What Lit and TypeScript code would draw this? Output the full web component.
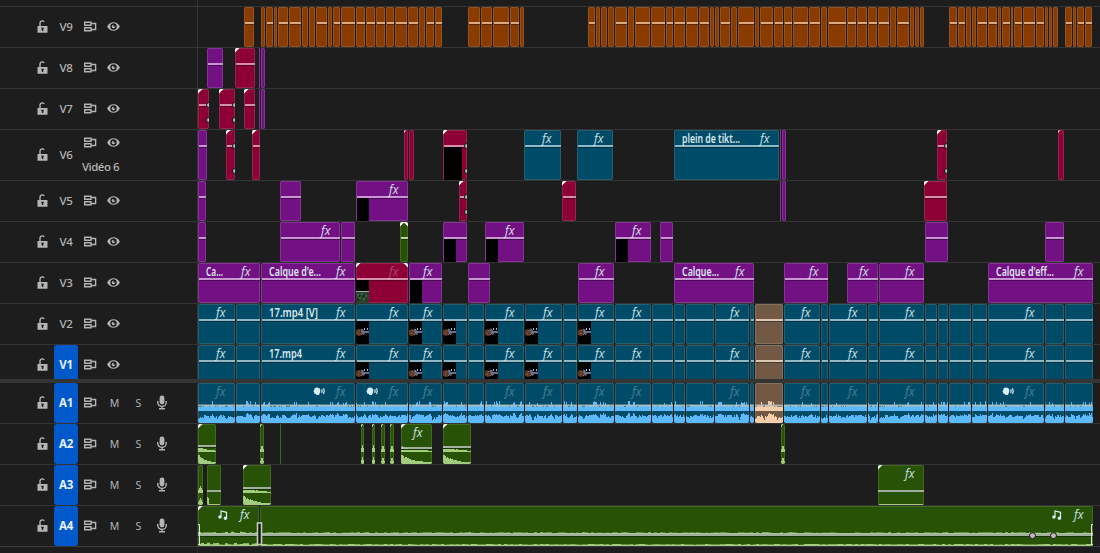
import { LitElement, html, svg, css, nothing } from "lit";
import { customElement, property } from "lit/decorators.js";
import { classMap } from "lit/directives/class-map.js";
import { styleMap } from "lit/directives/style-map.js";

type Wave = "voice" | "decay" | "peak" | "music" | "none";

interface Clip {
  s: number;
  e: number;
  color: string;
  line?: boolean;
  fx?: boolean;
  dim?: boolean;
  label?: string;
  len?: number;
  thumb?: string;
  thumbW?: number;
  corner?: boolean;
  corner2?: boolean;
  keys?: number[];
  speech?: boolean;
  note?: boolean;
  wave?: Wave;
  level?: number;
}

interface Track {
  name: string;
  audio?: boolean;
  target?: boolean;
  title?: string;
  size?: string;
  clips: Clip[];
}

const ORIGIN = 198;

const c = (s: number, e: number, color: string, more: Partial<Clip> = {}): Clip => ({
  s, e, color, line: true, ...more,
});

/* Runs of butted clips: each entry is a start, negative when the clip has no opacity line. */
const run = (starts: number[], end: number): Clip[] =>
  starts.map((v, i) => {
    const next = i + 1 < starts.length ? Math.abs(starts[i + 1]) - 1 : end;
    return c(Math.abs(v), next, "orange", { line: v > 0 });
  });

const v9: Clip[] = [
  c(244, 254, "orange"),
  ...run([-261, 266, -274, 278, 289, -302, -309, 316, -328, 333, 341, 356, 366, 376, 386, 395, 408, -419, 426, 435], 442),
  ...run([468, 481, 493, 510, -520], 524),
  ...run([588, -596, -601, -608, 615, -628, 635, 651, 666, 674, 686, 699, -710, -715, 720, -731, 738, -755, 760, 774, 784, 793,
    809, -821, 828, 847, 857, 868, 878, -890, 897, -910, -915, -920], 924),
  ...run([949, 958, -966, -972, 977, 988, -998, 1002, -1011, 1014, 1023, 1036, -1045, -1049, -1053], 1058),
  ...run([1065, -1073, 1077, 1085], 1092),
];

const cuts = [198, 236, 261, 356, 409, 443, 468, 485, 525, 563, 578, 615, 652, 674, 686, 715, 750, 755, 784, 821, 829, 868,
  879, 925, 938, 949, 972, 988, 1045, 1065, 1094];
const fxAt = new Set([198, 261, 356, 409, 485, 525, 578, 615, 715, 784, 829, 879, 988]);
const thumbAt = new Set([356, 409, 443, 485, 525, 578]);
const speechAt = new Set([261, 356, 988]);

const mainTrack = (label: string, len: number): Clip[] =>
  cuts.slice(0, -1).map((s, i) =>
    c(s, cuts[i + 1] - 1, s === 755 ? "tan" : "blue", {
      fx: fxAt.has(s),
      thumb: thumbAt.has(s) ? "photo" : undefined,
      label: s === 261 ? label : undefined,
      len,
    }));

const voiceTrack: Clip[] = cuts.slice(0, -1).map((s, i) =>
  c(s, cuts[i + 1] - 1, s === 755 ? "tan" : "blue", {
    line: false, fx: fxAt.has(s), dim: true, speech: speechAt.has(s), wave: "voice",
  }));

const g = (s: number, e: number, more: Partial<Clip> = {}): Clip => c(s, e, "green", { line: false, ...more });

const videoTracks: Track[] = [
  { name: "V9", clips: v9 },
  { name: "V8", clips: [
    c(207, 223, "purple"), c(235, 255, "red", { corner: true }),
    c(259, 260, "purple", { line: false }), c(261, 265, "purple", { line: false }) ] },
  { name: "V7", clips: [
    c(198, 209, "red", { corner: true, keys: [16, 31] }), c(219, 235, "red", { corner: true, keys: [16, 31] }),
    c(244, 255, "red", { corner: true }),
    c(259, 260, "purple", { line: false }), c(261, 265, "purple", { line: false }) ] },
  { name: "V6", title: "Vidéo 6", size: "tall", clips: [
    c(198, 207, "purple"), c(226, 235, "red", { corner: true, keys: [16, 41] }), c(252, 260, "red", { corner: true }),
    c(404, 408, "red", { line: false, corner: true }), c(409, 414, "red", { line: false }),
    c(443, 467, "red", { corner: true, thumb: "black", thumbW: 18, keys: [16, 41] }),
    c(524, 561, "blue", { fx: true }), c(577, 613, "blue", { fx: true }),
    c(674, 779, "blue", { fx: true, label: "plein de tikt...", len: 58 }),
    c(780, 781, "purple", { line: false }), c(782, 786, "purple", { line: false }),
    c(937, 947, "red", { corner: true, keys: [16, 41] }), c(1058, 1064, "red", { line: false, corner: true }) ] },
  { name: "V5", clips: [
    c(198, 206, "purple"), c(280, 301, "purple"), c(356, 408, "purple", { fx: true, thumb: "black" }),
    c(459, 467, "red", { corner: true, keys: [16, 31] }), c(562, 576, "red", { corner: true }),
    c(780, 781, "purple", { line: false }), c(782, 786, "purple", { line: false }),
    c(924, 947, "red", { corner: true }) ] },
  { name: "V4", clips: [
    c(198, 206, "purple"), c(280, 340, "purple", { fx: true }), c(341, 355, "purple"),
    c(400, 408, "green", { corner: true, corner2: true }), c(443, 467, "purple", { thumb: "black" }),
    c(485, 524, "purple", { fx: true, thumb: "black" }), c(615, 651, "purple", { fx: true, thumb: "black" }),
    c(660, 673, "purple"), c(925, 948, "purple"), c(1045, 1064, "purple") ] },
  { name: "V3", clips: [
    c(198, 260, "purple", { fx: true, label: "Ca...", len: 17 }),
    c(261, 355, "purple", { fx: true, label: "Calque d'e...", len: 52 }),
    c(356, 408, "red", { fx: true, dim: true, corner: true, corner2: true, thumb: "leaf" }),
    c(409, 442, "purple", { fx: true, thumb: "black" }), c(468, 490, "purple"), c(578, 614, "purple", { fx: true }),
    c(674, 754, "purple", { fx: true, label: "Calque...", len: 37 }), c(784, 828, "purple", { fx: true }),
    c(847, 878, "purple", { fx: true }), c(879, 924, "purple", { fx: true }),
    c(988, 1093, "purple", { fx: true, label: "Calque d'eff...", len: 58 }) ] },
  { name: "V2", clips: mainTrack("17.mp4 [V]", 49) },
  { name: "V1", target: true, size: "cut", clips: mainTrack("17.mp4", 33) },
];

const audioTracks: Track[] = [
  { name: "A1", audio: true, target: true, size: "first", clips: voiceTrack },
  { name: "A2", audio: true, target: true, clips: [
    g(198, 216, { corner: true, wave: "decay", level: 22 }), g(260, 264, { wave: "peak", corner: true }), g(280, 281),
    g(361, 364, { wave: "peak", corner: true }), g(372, 375, { wave: "peak", corner: true }),
    g(381, 385, { wave: "peak", corner: true }), g(390, 394, { wave: "peak", corner: true }),
    g(401, 432, { wave: "decay", corner: true, fx: true, level: 24 }),
    g(443, 471, { wave: "decay", corner: true, level: 23 }), g(781, 785, { wave: "peak", corner: true }) ] },
  { name: "A3", audio: true, target: true, clips: [
    g(198, 203, { wave: "peak" }), g(207, 221, { wave: "none", level: 25 }),
    g(243, 271, { wave: "decay", corner: true, level: 23 }),
    g(878, 924, { wave: "none", corner: true, fx: true, level: 25 }) ] },
  { name: "A4", audio: true, target: true, clips: [
    g(198, 259, { wave: "music", corner: true, fx: true, note: true }),
    g(260, 1093, { wave: "music", fx: true, note: true }) ] },
];

/* Repeatable noise, so that each clip keeps its own waveform. */
const noise = (n: number): number => {
  const v = Math.sin(n * 12.9898) * 43758.5453;
  return v - Math.floor(v);
};

const bars = (w: number, base: number, h: (i: number) => number): string => {
  let d = `M0 ${base}`;
  for (let i = 0; i < w; i++) d += `V${(base - h(i)).toFixed(1)}h1`;
  return d + `V${base}Z`;
};

const waveform = (k: Clip) => {
  const w = k.e - k.s;
  if (k.wave === "voice") {
    const amp = (i: number) => {
      const x = k.s + i;
      return 0.45 * noise(x) + 0.55 * noise(Math.floor(x / 3) + 7);
    };
    return svg`
      <path class="wave" d=${bars(w, 28, (i) => (amp(i) < 0.3 ? 4 : amp(i) < 0.72 ? 6 : 8 + noise(i) * 2))}></path>
      <path class="wave" d=${bars(w, 40, (i) => 2.5 + Math.pow(amp(i), 0.7) * 7.5)}></path>
      <rect class="gain" y="21.500" width=${w} height="2"></rect>`;
  }
  if (k.wave === "decay") {
    const env = (i: number) => Math.exp(-i / (w * 0.42));
    return svg`
      <path class="wave" d=${bars(w, 28, (i) => 1 + 5 * env(i) * (0.8 + noise(i) * 0.3))}></path>
      <path class="wave" d=${bars(w, 40, (i) => 1 + 8 * env(i) * (0.8 + noise(i + 9) * 0.3))}></path>
      <rect class="shade" y=${(k.level ?? 22) + 1} width=${w} height="1"></rect>
      <rect class="gain" y=${(k.level ?? 22) - 1} width=${w} height="2"></rect>`;
  }
  if (k.wave === "peak") {
    const top = (i: number) => 2 + 5 * (1 - Math.abs(i - w / 2 + 0.5) / (w / 2));
    return svg`<path class="wave" d=${bars(w, 28, top)}></path><path class="wave" d=${bars(w, 40, top)}></path>`;
  }
  if (k.wave === "music") {
    const loud = w < 100 ? 2 : 0.9;
    return svg`
      <path class="wave soft" d=${bars(w, 28, (i) => 0.8 + loud * noise(Math.floor((i + k.s) / 3)))}></path>
      <path class="wave soft" d=${bars(w, 40, (i) => 1.2 + loud * noise(Math.floor((i + k.s) / 3) + 50))}></path>
      <rect class="gain" y="27.500" width=${w} height="2.500"></rect>
      <rect class="shade" y="30" width=${w} height="1"></rect>`;
  }
  return k.level
    ? svg`<rect class="wave" y="39" width=${w} height="1"></rect>
        ${w < 20 ? svg`<path class="wave" d="M0 40V34l1-4 1 5v5z"></path>` : nothing}
        <rect class="gain" y=${k.level} width=${w} height="2"></rect>`
    : nothing;
};

@customElement("timeline-clip")
class TimelineClip extends LitElement {
  @property({ attribute: false }) clip!: Clip;

  static styles = css`
    :host { display: block; height: 100%; }
    .clip {
      position: relative; height: 100%; overflow: hidden;
      border-radius: 2px; background: var(--fill); box-shadow: inset 0 0 0 1px var(--edge);
    }
    .orange { --fill: #8a3b00; --edge: #925222; --rule: #dba981; }
    .purple { --fill: #731084; --edge: #853395; --rule: #c994d2; }
    .red { --fill: #8c0035; --edge: #96234e; --rule: #d68fa9; }
    .blue { --fill: #004c68; --edge: #24606f; --rule: #8fb8c4; --wave: #5cb9fb; }
    .tan { --fill: #725945; --edge: #85705e; --rule: #dcc8b4; --wave: #f6cdab; }
    .green { --fill: #285306; --edge: #40681f; --rule: #b9d39f; --wave: #a3cd7d; }
    .thin { box-shadow: none; border-radius: 0; background: var(--edge); }
    .head { display: flex; justify-content: flex-end; height: 15px; padding-right: 9px; }
    .head svg { display: block; flex: none; overflow: visible; }
    .label { margin: 0 auto 0 8px; }
    .name { font: 600 12px "Noto Sans", "Open Sans", sans-serif; fill: #dbe7ec; }
    .fx { font: italic 400 12.5px "Open Sans", "Noto Sans", sans-serif; fill: #cfe2e9; }
    .dim .fx { fill: #fff; opacity: 0.27; }
    .rule { height: 2px; margin-left: 1px; background: var(--rule); box-shadow: 0 1px 0 rgba(0, 0, 0, 0.35); }
    .thumb { width: 12px; height: 23px; margin-left: 1px; background: #000; }
    .photo, .leaf { width: 13px; margin-left: 0; }
    .wide { width: 18px; height: 33px; }
    .thumb svg { display: block; }
    .over { position: absolute; top: 0; left: 0; overflow: visible; }
    .corner { fill: #fff; }
    .wave { fill: var(--wave); shape-rendering: crispEdges; }
    .soft { shape-rendering: auto; }
    .gain { fill: #b5bfba; opacity: 0.85; }
    .shade { fill: #173303; }
    .key { fill: #b9b9b9; stroke: #161616; stroke-width: 1; }
    .mark { fill: #d8eef5; }
    .stroke { fill: none; stroke: #d8eef5; stroke-width: 1.2; }
    .icon { margin-right: 10px; }
    .music { margin-right: 12px; }
  `;

  private thumb(kind: string, wide: boolean) {
    return html`<div class=${classMap({ thumb: true, [kind]: true, wide })}>
      ${kind === "photo"
        ? html`<svg width="13" height="23" viewBox="0 0 13 23">
            <path d="M0 9l3-1 1 1 2-2v7l-3 1-3-1z" fill="#5b3a2c"></path>
            <path d="M5 8l2 0 1 2h5v2H9l-1 2-2-1z" fill="#66718a"></path>
            <path d="M2 12h1v1H2zM5 13h1v1H5zM3 9h1v1H3z" fill="#c96430"></path>
            <path d="M8 7h1v2H8zM11 7h1v2h-1z" fill="#a9bdd6"></path>
          </svg>`
        : kind === "leaf"
          ? html`<svg width="13" height="23" viewBox="0 0 13 23">
              <path d="M0 12h13v11H0z" fill="#27442c"></path><path d="M0 11h13v1H0z" fill="#9fb19d"></path>
              <path d="M1 14h2v2H1zM5 13h2v2H5zM9 15h2v2H9zM3 17h2v2H3zM7 18h2v2H7z" fill="#3f6343"></path>
              <path d="M3 15h1v2H3zM7 15h2v2H7zM1 19h2v2H1zM10 19h1v2h-1z" fill="#142417"></path>
            </svg>`
          : nothing}
    </div>`;
  }

  render() {
    const k = this.clip;
    const w = k.e - k.s;
    return html`<div class=${classMap({ clip: true, [k.color]: true, thin: w < 2, dim: !!k.dim })}>
      ${k.wave || k.level
        ? html`<svg class="over" width=${w} height="40">${waveform(k)}</svg>`
        : nothing}
      ${w < 3 ? nothing : html`<div class="head">
        ${k.label
          ? html`<svg class="label" width=${k.len ?? 0} height="15">
              <text class="name" y="12.500" textLength=${k.len ?? 0} lengthAdjust="spacingAndGlyphs">${k.label}</text>
            </svg>`
          : nothing}
        ${k.speech
          ? html`<svg class="icon" width="13" height="15" viewBox="0 0 13 15">
              <path class="mark" d="M4 4.600a3.400 3.400 0 0 1 3.300 3.600c0 1.500-1 2.200-1.200 3.800H3.200c0-1-.3-1.200-1.200-1.200-.8 0-.9-.5-.9-1.600L.4 8.600l.6-1A3.300 3.300 0 0 1 4 4.600z"></path>
              <path class="stroke" d="M8.700 6.300q.9 1.800 0 3.600M10.500 5.200q1.600 2.900 0 5.800"></path>
            </svg>`
          : nothing}
        ${k.note
          ? html`<svg class="music" width="10" height="15" viewBox="0 0 10 15">
              <path class="stroke" d="M3 11V5l5.500 1.300V12"></path>
              <circle class="mark" cx="1.900" cy="11" r="1.700"></circle><circle class="mark" cx="7.400" cy="12.300" r="1.700"></circle>
            </svg>`
          : nothing}
        ${k.fx ? html`<svg width="10" height="15"><text class="fx" x="0" y="12.500" textLength="9.500" lengthAdjust="spacingAndGlyphs">fx</text></svg>` : nothing}
      </div>`}
      ${k.line
        ? html`<div class="rule"></div>${k.thumb ? this.thumb(k.thumb, k.thumbW === 18) : nothing}`
        : nothing}
      ${k.corner || k.keys
        ? html`<svg class="over" width=${w} height="50">
            ${k.corner ? svg`<path class="corner" d=${w < 7 ? "M0 0h2L0 3z" : "M0 0h4.500L0 4.500z"}></path>` : nothing}
            ${k.corner2 ? svg`<path class="corner" d=${`M${w} 0h-4.500l4.500 4.500z`}></path>` : nothing}
            ${k.keys ? k.keys.map((y) => svg`<circle class="key" cx=${w} cy=${y} r="2.500"></circle>`) : nothing}
          </svg>`
        : nothing}
    </div>`;
  }
}

@customElement("track-row")
class TrackRow extends LitElement {
  @property({ attribute: false }) track!: Track;

  static styles = css`
    :host { display: block; }
    .row { display: flex; box-sizing: border-box; height: 41px; border-top: 1px solid #343434; overflow: hidden; }
    .tall { height: 51px; }
    .cut { height: 35px; }
    .first { height: 40px; border-top: 0; }
    .header {
      display: flex; align-items: center; box-sizing: border-box; flex: none;
      width: 198px; height: 40px; padding-left: 37px; border-right: 1px solid #343434;
    }
    .tall .header { height: 50px; }
    .header svg { display: block; flex: none; }
    .solid { fill: #b4b4b4; }
    .line { fill: none; stroke: #b4b4b4; stroke-width: 1.4; }
    .lock { margin-bottom: 1px; }
    .name {
      flex: none; box-sizing: border-box; width: 24px; height: 100%; margin-left: 6px; padding-bottom: 1px;
      display: grid; place-items: center; border-radius: 3px; letter-spacing: -0.3px;
      color: #b4b4b4; font: 500 11.5px "Noto Sans", "Open Sans", sans-serif;
    }
    .target { background: #0059cb; color: #e6effa; font-weight: 700; }
    .tools { display: flex; align-items: center; flex: none; margin-left: 6px; padding-bottom: 1px; }
    .stack { display: grid; gap: 9px; justify-items: start; padding-top: 3px; }
    .title {
      color: #b4b4b4; font: 500 11.5px/18px "Noto Sans", "Open Sans", sans-serif;
      margin-left: 4px; letter-spacing: -0.5px;
    }
    .eye { margin-left: 10px; }
    .letter { flex: none; width: 24px; text-align: center; color: #b4b4b4; font: 10.5px/14px "Noto Sans", "Open Sans", sans-serif; }
    .mute { margin-left: 5.5px; }
    .mic { margin-left: 6px; }
    .lane { display: flex; height: 40px; flex: 1; min-width: 0; }
    .tall .lane { height: 50px; }
    .slot { flex: none; height: 100%; }
  `;

  private tools() {
    const t = this.track;
    return html`<div class="tools">
      <svg width="13" height="11" viewBox="0 0 13 11">
        <path class="line" d="M.7 1.200h6.300v3.100H.7zM.7 6.700h6.300v3.100H.7zM7 2.500h4.600v6H7"></path>
      </svg>
      ${t.audio
        ? html`<span class="letter mute">M</span><span class="letter">S</span>
          <svg class="mic" width="10" height="15" viewBox="0 0 10 15">
            <rect class="solid" x="2.600" y="0.500" width="4.800" height="9" rx="2.400"></rect>
            <path class="line" d="M.8 6v1.500a4.200 4 0 0 0 8.400 0V6M5 11.500V14M2 13.800h6"></path>
          </svg>`
        : html`<svg class="eye" width="13" height="9" viewBox="0 0 13 9">
            <path class="solid" fill-rule="evenodd" d="M6.500.3C3.600.3 1.300 2.100.1 4.500c1.200 2.400 3.500 4.200 6.400 4.200s5.200-1.800 6.400-4.200C11.700 2.100 9.400.3 6.500.3zm0 1a3.200 3.200 0 1 1 0 6.400 3.200 3.200 0 0 1 0-6.400z"></path>
            <path class="solid" d="M6.500 2.700a1.800 1.800 0 1 0 1.800 1.800H6.500z"></path>
          </svg>`}
    </div>`;
  }

  render() {
    const t = this.track;
    let cursor = ORIGIN;
    return html`<div class=${classMap({ row: true, [t.size ?? "plain"]: true })}>
      <div class="header">
        <svg class="lock" width="11" height="13" viewBox="0 0 11 13">
          <path class="solid" fill-rule="evenodd" d="M.5 6h10v6.700H.5zM4.300 7.800v1.400h.6v1.800h1.300V9.200h.6V7.800z"></path>
          <path class="line" d="M3 6V3.500C3 1.700 4 .9 5.300.9c.9 0 1.500.4 1.900 1.100"></path>
        </svg>
        <div class=${classMap({ name: true, target: !!t.target })}>${t.name}</div>
        ${t.title
          ? html`<div class="stack">${this.tools()}<span class="title">${t.title}</span></div>`
          : this.tools()}
      </div>
      <div class="lane">
        ${t.clips.map((k) => {
          const gap = k.s - cursor;
          cursor = k.e;
          return html`<div class="slot" style=${styleMap({ marginLeft: `${gap}px`, width: `${k.e - k.s}px` })}>
            <timeline-clip .clip=${k}></timeline-clip>
          </div>`;
        })}
      </div>
    </div>`;
  }
}

@customElement("app-root")
class AppRoot extends LitElement {
  static styles = css`
    :host {
      display: block; position: relative; box-sizing: border-box; width: 1100px; height: 553px; overflow: hidden;
      padding-top: 6px; background: #1d1d1d;
    }
    .edge { height: 6px; width: 197px; margin-top: -6px; border-right: 1px solid #343434; }
    .divider { height: 4px; background: #343434; }
    .foot { height: 7px; border-top: 1px solid #3c3c3c; }
    .foot .stub { width: 197px; height: 7px; border-right: 1px solid #2c2c2c; }
    .overlay { position: absolute; top: 506px; left: 198px; }
    .handle { fill: #111; stroke: #c3cdb9; stroke-width: 1.6; }
    .bracket { fill: none; stroke: #dfe6d8; stroke-width: 1; }
    .key { fill: #b9b9b9; stroke: #161616; stroke-width: 1; }
  `;

  render() {
    return html`
      <div class="edge"></div>
      ${videoTracks.map((t) => html`<track-row .track=${t}></track-row>`)}
      <div class="divider"></div>
      ${audioTracks.map((t) => html`<track-row .track=${t}></track-row>`)}
      <div class="foot"><div class="stub"></div></div>
      <svg class="overlay" width="896" height="40">
        <rect class="handle" x="59.500" y="17" width="4" height="21.500"></rect>
        <path class="bracket" d="M0 18.500h1.500v20H0M895 18.500h-1.500v20h1.500"></path>
        <circle class="key" cx="834.500" cy="29.700" r="3"></circle>
        <circle class="key" cx="855.500" cy="29.700" r="3"></circle>
      </svg>`;
  }
}
